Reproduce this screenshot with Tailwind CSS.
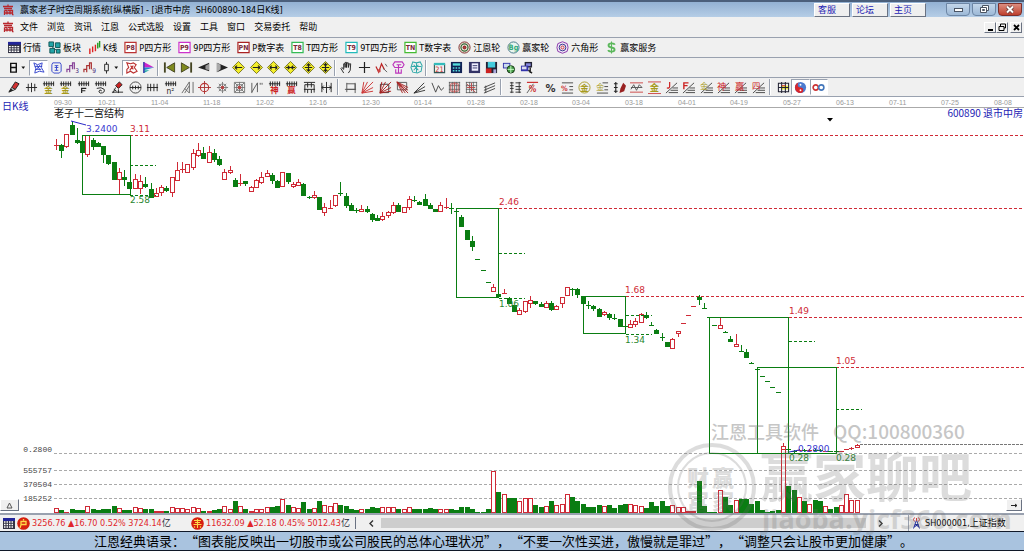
<!DOCTYPE html>
<html lang="zh-CN">
<head>
<meta charset="utf-8">
<title>赢家老子时空周期系统[纵横版]</title>
<script src="https://cdn.jsdelivr.net/npm/@tailwindcss/browser@4"></script>
</head>
<body class="flex h-screen flex-col overflow-hidden bg-white font-['DejaVu_Sans_Condensed','Open_Sans','Noto_Sans_CJK_SC',sans-serif] text-[9px] leading-3 text-black select-none">

<header class="flex h-[17px] shrink-0 items-center border-t-2 border-[#4b5f7b] bg-linear-to-b from-[#93b1d3] to-[#b5cde6] pl-[2px]">
  <svg class="h-[12px] w-[12px]" viewBox="0 0 12 12"><path d="M1 2.500h10M6 .5v2M2 4.500h8M2.500 6.500h2.500v4M2.500 6.500v4.500M6 6.500h2v4M8.500 6.500h2v4l1 .5M3 9h7" fill="none" stroke="#b8272d" stroke-width="1.300"/></svg>
  <h1 class="ml-[6px] whitespace-pre">赢家老子时空周期系统[纵横版] - [退市中房  SH600890-184日K线]</h1>
  <nav class="ml-auto flex gap-[2px] text-[#1c1cb4]">
    <a href="#kefu" class="h-[14px] w-9 border border-white border-r-gray-500 border-b-gray-500 bg-[#efefef] pl-[3px]">客服</a>
    <a href="#luntan" class="h-[14px] w-9 border border-white border-r-gray-500 border-b-gray-500 bg-[#efefef] pl-[3px]">论坛</a>
    <a href="#home" class="h-[14px] w-9 border border-white border-r-gray-500 border-b-gray-500 bg-[#efefef] pl-[3px]">主页</a>
  </nav>
  <div class="ml-5 mr-[2px] flex gap-[2px]">
    <button aria-label="最小化" class="flex h-[13px] w-6 items-center justify-center rounded-b-sm border border-[#6d86a5] bg-linear-to-b from-[#c3d6ea] to-[#9db9d7]"><span class="h-[4px] w-[9px] border border-gray-600 bg-white"></span></button>
    <button aria-label="还原" class="flex h-[13px] w-6 items-center justify-center rounded-b-sm border border-[#6d86a5] bg-linear-to-b from-[#c3d6ea] to-[#9db9d7]"><svg class="h-[9px] w-[11px]" viewBox="0 0 11 9" fill="#fff" stroke="#4b5563"><path d="M3.500 .5h6v5h-6z"/><path d="M1.500 2.500h6v5h-6z"/><path d="M3.500 4.500h2v1h-2z"/></svg></button>
    <button aria-label="关闭" class="flex h-[13px] w-6 items-center justify-center rounded-b-sm border border-[#7c2f2a] bg-linear-to-b from-[#dc8d80] to-[#bd3d2c]"><svg class="h-[9px] w-[10px]" viewBox="0 0 10 9"><path d="M2 1.500l6 6M8 1.500l-6 6" stroke="#5a3535" stroke-width="3.500"/><path d="M2 1.500l6 6M8 1.500l-6 6" stroke="#fff" stroke-width="2"/></svg></button>
  </div>
</header>

<div class="flex h-5 shrink-0 items-center bg-[#f0f0f0] pl-[2px]">
  <svg class="h-[12px] w-[12px]" viewBox="0 0 12 12"><path d="M1 2.500h10M6 .5v2M2 4.500h8M2.500 6.500h2.500v4M2.500 6.500v4.500M6 6.500h2v4M8.500 6.500h2v4l1 .5M3 9h7" fill="none" stroke="#b8272d" stroke-width="1.300"/></svg>
  <nav class="ml-[6px] flex gap-[9px]">
    <button>文件</button><button>浏览</button><button>资讯</button><button>江恩</button><button>公式选股</button><button>设置</button><button>工具</button><button>窗口</button><button>交易委托</button><button>帮助</button>
  </nav>
  <div class="mr-[2px] ml-auto flex">
    <button aria-label="最小化子窗口" class="flex h-[11px] w-3 items-end justify-center border border-white border-r-gray-500 border-b-gray-500 pb-[1px]"><span class="h-[2px] w-[5px] bg-black"></span></button>
    <button aria-label="还原子窗口" class="flex h-[11px] w-3 items-center justify-center border border-white border-r-gray-500 border-b-gray-500"><svg class="h-[9px] w-[9px]" viewBox="0 0 9 9" fill="#f0f0f0" stroke="#000"><path d="M2.500 1h5v4h-5z"/><path d="M1 3.500h5v4H1z"/></svg></button>
    <button aria-label="关闭子窗口" class="ml-[2px] flex h-[11px] w-3 items-center justify-center border border-white border-r-gray-500 border-b-gray-500"><svg class="h-[7px] w-[7px]" viewBox="0 0 7 7"><path d="M1 1l5 5M6 1l-5 5" stroke="#000" stroke-width="1.800"/></svg></button>
  </div>
</div>

<div id="bar1" class="flex h-5 shrink-0 items-center gap-[7px] border-t border-gray-400 bg-[#f0f0f0] pl-2"></div>
<div class="flex h-5 shrink-0 items-center border-t border-gray-400 bg-[#f0f0f0] pl-[5px]">
  <div id="bar2a" class="flex w-[152px]"></div>
  <div class="h-4 w-[2px] border-l border-gray-400 bg-white"></div>
  <div id="bar2b" class="ml-[2px] flex w-[173px]"></div>
  <div class="h-4 w-[2px] border-l border-gray-400 bg-white"></div>
  <div id="bar2c" class="ml-[2px] flex w-[87px]"></div>
  <div class="h-4 w-[2px] border-l border-gray-400 bg-white"></div>
  <div id="bar2d" class="ml-[4px] flex w-[104px]"></div>
</div>
<div class="flex h-5 shrink-0 items-center border-t border-b border-gray-400 bg-[#f0f0f0] pl-[5px]">
  <div id="bar3a" class="flex w-[330px]"></div>
  <div class="ml-[2px] h-4 w-[2px] border-l border-gray-400 bg-white"></div>
  <div id="bar3b" class="ml-[3px] flex w-[156px]"></div>
  <div class="ml-[2px] h-4 w-[2px] border-l border-gray-400 bg-white"></div>
  <div id="bar3c" class="ml-[5px] flex w-[260px]"></div>
  <div class="ml-[2px] h-4 w-[2px] border-l border-gray-400 bg-white"></div>
  <div id="bar3d" class="ml-[4px] flex w-[53px]"></div>
</div>

<main class="relative min-h-0 flex-1">
  <svg id="chart" class="block h-full w-full" viewBox="0 97 1024 416" role="img" aria-label="日K线图"></svg>
  <button aria-label="展开" class="absolute bottom-[2px] left-0 flex h-3 w-[19px] items-center justify-center border border-white border-r-gray-500 border-b-gray-500 bg-[#f0f0f0]"><svg class="h-[7px] w-[7px]" viewBox="0 0 7 7"><path d="M3.500 1l2.500 5h-5z" fill="none" stroke="#555"/></svg></button>
  <button aria-label="右移" class="absolute right-[2px] bottom-[2px] flex h-3 w-4 items-center justify-center border border-white border-r-gray-500 border-b-gray-500 bg-[#f0f0f0]"><svg class="h-[5px] w-[7px]" viewBox="0 0 7 5"><path d="M0 2.500h6M4 1l2 1.500l-2 1.500" fill="none" stroke="#222"/></svg></button>
</main>

<footer class="shrink-0">
  <div class="relative flex h-[18px] items-center border-t-2 border-gray-400 bg-[#f0f0f0] text-[#e0262b]">
    <svg class="ml-[3px] h-[11px] w-[12px]" viewBox="0 0 12 11"><path d="M0 0h12v11H0z" fill="#334"/><path d="M0 0h12v3H0z" fill="#22259a"/><path d="M1 4h10M1 6.500h10M1 9h10" stroke="#fff" stroke-width="1.500" stroke-dasharray="1.500 1"/></svg>
    <svg class="ml-[2px] h-[13px] w-[13px]" viewBox="0 0 13 13"><circle cx="6.500" cy="6.500" r="6.300" fill="#d6200f"/><path d="M6.500 2v1.500M4 4.500h5v3H4zM4 5v3l-1 3" fill="none" stroke="#ffd84a" stroke-width="1.300"/></svg>
    <span class="ml-[2px] w-[159px] whitespace-nowrap">3256.76 ▲16.70 0.52% 3724.14<span class="text-gray-800">亿</span></span>
    <svg class="h-[13px] w-[13px]" viewBox="0 0 13 13"><circle cx="6.500" cy="6.500" r="6.300" fill="#d6200f"/><path d="M3 3.500h7M4 5.500h5M2.500 7.500h8M6.500 2v9M4 9.500l-1 1M9 9.500l1 1" fill="none" stroke="#ffd84a" stroke-width="1.100"/></svg>
    <span class="ml-[2px] w-[150px] border-r border-gray-500 whitespace-nowrap">11632.09 ▲52.18 0.45% 5012.43<span class="text-gray-800">亿</span></span>
    <div class="flex h-full flex-1 items-center border-r border-gray-400">
      <button aria-label="向左滚动" class="flex h-full w-[25px] items-center justify-end pr-[7px]"><svg class="h-[7px] w-[5px]" viewBox="0 0 5 7"><path d="M4 .5l-3 3l3 3" fill="none" stroke="#333" stroke-width="1.400"/></svg></button>
      <div class="h-[10px] flex-1 bg-[#cdcdcd]"></div>
      <button aria-label="向右滚动" class="flex h-full w-[42px] items-center pl-3"><svg class="h-[7px] w-[5px]" viewBox="0 0 5 7"><path d="M1 .5l3 3l-3 3" fill="none" stroke="#333" stroke-width="1.400"/></svg></button>
    </div>
    <svg class="ml-[3px] h-[12px] w-[9px]" viewBox="0 0 9 12" fill="none"><path d="M4.500 3L1.500 11.500M4.500 3l3 8.500M3 7.500h3M2 10l4.500-2.500M7 10L3 7.500" stroke="#23309a"/><path d="M2.500 .5q-2 2 0 4M6.500 .5q2 2 0 4M4.500 1v3" stroke="#c93a3a"/></svg>
    <span class="ml-[4px] w-[99px] whitespace-nowrap text-black">SH000001,上证指数</span>
  </div>
  <p class="h-5 border-t border-b border-gray-900 bg-[#a9c3df] pl-[94px] font-['Noto_Sans_CJK_SC',sans-serif] text-[13px] leading-[18px] whitespace-nowrap [text-spacing-trim:space-all]">江恩经典语录：“图表能反映出一切股市或公司股民的总体心理状况”，“不要一次性买进，傲慢就是罪过”，“调整只会让股市更加健康”。</p>
</footer>

<svg class="pointer-events-none absolute right-0 bottom-[15px] h-[121px] w-[374px]" viewBox="650 415 374 121" aria-hidden="true" font-family="Noto Sans CJK SC, sans-serif" fill="#6b6b6b">
  <g opacity=".38"><text x="711" y="439" font-size="18" font-weight="500">江恩工具软件</text><text x="833" y="439" font-size="19" font-weight="500">QQ:100800360</text></g>
  <g opacity=".23">
    <circle cx="712" cy="487" r="42" fill="none" stroke="#6b6b6b" stroke-width="4"/>
    <circle cx="712" cy="487" r="34" fill="none" stroke="#6b6b6b" stroke-width="2"/>
    <g font-size="22" font-weight="900"><text x="687" y="486">财</text><text x="712" y="486">赢</text><text x="687" y="510">富</text><text x="712" y="510">家</text></g>
    <text x="760" y="497" font-size="53" font-weight="700">赢家聊吧</text>
    <text x="762" y="529" font-size="27" font-weight="700" font-family="Open Sans, sans-serif">jiaoba.yjcf360.com</text>
  </g>
</svg>

<script>
const box = (c, t) => `<path d="M1 1.500h12v11H1z" fill="#fff" stroke="${c}" stroke-width="1.300"/><text x="7" y="9.800" text-anchor="middle" font-size="7.500" font-weight="700" stroke="none" fill="#7a2a3a">${t}</text>`;
const glyph = (t, c, s = 13, cy = 7) => `<text x="7" y="${cy + s * .37}" text-anchor="middle" font-size="${s}" font-weight="600" stroke="none" fill="${c}">${t}</text>`;
const p = (d, c = '#222', w = 1) => `<path d="${d}" fill="none" stroke="${c}" stroke-width="${w}"/>`;
const f = (d, c) => `<path d="${d}" fill="${c}" stroke="none"/>`;
const calendar = f('M0 1h14v12H0z', '#334') + f('M0 1h14v3H0z', '#22259a') + '<path d="M1 6h12M1 8.500h12M1 11h12" stroke="#fff" stroke-width="1.500" stroke-dasharray="2 1"/>';
const comb = p('M1 3h12M2.500 .5v5M5 .5v5M7.500 .5v5M10 .5v5M12.500 .5v5');
const diamond = a => `<path d="M7 .5l6.500 6.500l-6.500 6.500l-6.500-6.500z" fill="#f4ef2a" stroke="#77741c"/>` + p(a, '#222', 1.2);
const pen = f('M5 7l4-6l4 2l-4 6z', '#d33131') + p('M5 7l4-6l4 2l-4 6zM5 7l-3 5l7-3') + f('M2 12l2-4l3 2z', '#222');
const lines = p('M4 12.500h10M6 10h8M8 7.500h6M1 13L13 2', '#444');
const grid = p('M1 1.500h12M1 5h12M1 9h12M1 12.500h12M1.500 1v12M5 1v12M9 1v12M12.500 1v12', '#555', .8);
const rays = c => p('M1 13L13 1M1 13L7 1M1 13L13 7M1 13L3 1M1 13L13 11', c);

const labelled = [
  ['行情', calendar],
  ['板块', f('M1 1h5v5H1zM8 2h5v5H8zM2 8h5v5H2zM9 9h4v4H9z', '#22a5a8') + p('M1 1h5v5H1zM8 2h5v5H8zM2 8h5v5H2zM9 9h4v4H9zM4 6l5 4', '#155')],
  ['K线', p('M2 8v6M5 6v6', '#d22', 1.500) + p('M8 4v7', '#d22', 1.500) + p('M10.500 2v6M12.500 0v7', '#292', 1.500)],
  ['P四方形', box('#b33', 'P8')], ['9P四方形', box('#c3c', 'P9')], ['P数字表', box('#a22', 'PN')],
  ['T四方形', box('#3b5', 'T8')], ['9T四方形', box('#2bb', 'T9')], ['T数字表', box('#4b3', 'TN')],
  ['江恩轮', '<circle cx="7" cy="7" r="6" fill="#f4e8df" stroke="#722"/><circle cx="7" cy="7" r="3.800" stroke="#363" stroke-width="1.300"/><circle cx="7" cy="7" r="1.600" fill="#c33" stroke="#622"/>'],
  ['赢家轮', '<circle cx="7" cy="7" r="6" fill="#e9f5ef" stroke="#478"/><text x="7" y="10" text-anchor="middle" font-size="8" font-weight="700" stroke="none" fill="#3a7">Bg</text>'],
  ['六角形', '<path d="M7 .8l5 2l1 4.200l-1 4.200l-5 2l-5-2l-1-4.200l1-4.200z" fill="#efe6f5" stroke="#83a"/><circle cx="7" cy="7" r="3.600" stroke="#338"/><circle cx="7" cy="7" r="1.600" stroke="#c33"/>'],
  ['赢家服务', p('M10.500 4Q10 2.500 7 2.500Q3.800 2.500 3.800 4.600Q3.800 6.600 7 7Q10.300 7.500 10.300 9.500Q10.300 11.500 7 11.500Q4 11.500 3.500 9.800', '#5cb85c', 2) + p('M7 .5v13', '#5cb85c', 1.200)]
];
document.getElementById('bar1').innerHTML = labelled.map(([t, s]) =>
  `<button class="flex items-center gap-[2px] whitespace-nowrap"><svg class="h-[13px] w-[13px]" viewBox="0 0 14 14" fill="none">${s}</svg>${t}</button>`).join('');

// Each entry: label, drawing, state ("on" = pressed, "menu" = has a drop-down arrow).
const bars = {
  bar2a: [
    ['日线', p('M4 2.500h6v9.500H4zM4 7h6', '#111', 1.5) + f('M15.500 6h4l-2 2.500z', '#111'), 'menu'],
    ['叠加', p('M2 2l4 2l5-2l-1 5l3 5l-5-1l-5 2l1-5zM3 6h8M4 9h6M5 4l4 6M9 4l-5 6', '#3344cc'), 'on'],
    ['信息', p('M3 2h8l1 2v7l-2 2H4l-2-2V4zM5 5h4M5 7h4M5 10h4M7 5v5', '#3344cc')],
    ['波段三', p('M1 12v-3h3v3M4 9V5h3v4M7 6V2h2v7', '#849', 1.3) + '<text x="10" y="13" font-size="7" stroke="none" fill="#427">3</text>'],
    ['波段九', p('M1 12v-3h3v3M4 9V5h3v4M7 6V2h2v7', '#a33', 1.3) + '<text x="10" y="13" font-size="7" stroke="none" fill="#427">9</text>'],
    ['K线样式', p('M5 3.500h4v7H5zM7 1v2.500M7 10.500v3', '#222') + f('M15.500 6h4l-2 2.500z', '#111'), 'menu'],
    ['缠绕', p('M2 2l4 1l3-1l3 2l-2 3l3 4l-4 2l-3-2l-4 2V9l2-2zM6 5l3 4M9 5l-4 5', '#b33', 1.2), 'on'],
    ['着色', f('M2 1l11 6H2z', '#c2c') + f('M2 7h11L2 10z', '#28c') + f('M2 10l6 0l-6 3z', '#2aa') + p('M2 1v12', '#33a', 1.5)]
  ],
  bar2b: [
    ['最前', p('M2 1.500v11', '#442', 2) + '<path d="M12.500 2v10L4 7z" fill="#7f8a1e" stroke="#442"/>'],
    ['最后', p('M12 1.500v11', '#442', 2) + '<path d="M1.500 2v10L10 7z" fill="#7f8a1e" stroke="#442"/>'],
    ['向前', f('M0 7l12-5v9z', '#222') + f('M8 5l4-2v7l-4-1z', '#999')], ['向后', f('M14 7L2 2v10z', '#222') + f('M2 2l4 2v5l-4 3z', '#aaa')],
    ['左移', diamond('M3 7h8M3 7l2.500-2M3 7l2.500 2')], ['右移', diamond('M3 7h8M11 7L8.500 5M11 7L8.500 9')],
    ['拉宽', diamond('M3 7h8M3 7l2-2M3 7l2 2M11 7L9 5M11 7L9 9')], ['压缩', diamond('M2 7h10M6 7L4 5M6 7L4 9M8 7l2-2M8 7l2 2')],
    ['拉高', diamond('M7 2.500v9M3 7h8M7 3l-2 2M7 3l2 2M7 11l-2-2M7 11l2-2')], ['压低', diamond('M7 2v10M3 7h8M5 3l2 2l2-2M5 11l2-2l2 2')]
  ],
  bar2c: [
    ['移动', p('M4 13L1 8l1-1l2 2V3h1.500v4V1.500H7V7l.5-5H9v5l1-4h1.500L11 10l-2 3')], ['十字', p('M7 1v12M1 7h12', '#222', 1.3)],
    ['波浪', p('M1 6l3 6l3-9l3 6', '#b22', 1.3) + p('M9 8l4 4M11 3l2 3', '#555') + f('M3 9h3v3H3z', '#c44')],
    ['画文', p('M3 1l8 0l2 3l-2 3H3L1 4zM5 4h5M7 4v9M4 9v4h6V9', '#b3b', 1.2)], ['区间', p('M3 1l4 1l4-1l2 4l-1 6l-4 2l-5-1l-2-5zM2 6h10M7 2v10M4 4l5 6M9 4l-5 6', '#3aa', 1.1)]
  ],
  bar2d: [
    ['日历', p('M1.500 3.500h11v9h-11z', '#355', 1.2) + f('M1 2h12v2.500H1z', '#3bb') + '<text x="7" y="11.500" text-anchor="middle" font-size="8" stroke="none" fill="#c33">21</text>'],
    ['计算器', f('M1 1h12v12H1z', '#125') + f('M3 2.500h8v2.500H3z', '#5dd') + '<path d="M3 7.500h8M3 10.500h8" stroke="#5dd" stroke-width="1.600" stroke-dasharray="1.700 1.300"/>'],
    ['笔记', f('M1 1h12v12H1z', '#336') + f('M4 2.500h7v8H4z', '#eef') + p('M5 5h5M5 7.500h5', '#336')],
    ['保存', f('M1 1h12v12H1z', '#223') + f('M3 1h8v6H3z', '#4cd') + f('M1 8h6v5H1z', '#c22') + f('M9 9h3v4H9z', '#aad')],
    ['网络', f('M1 2h8v6H1z', '#33a') + f('M2 3h6v4H2z', '#cde') + '<circle cx="9.500" cy="9" r="4" fill="#494" stroke="#131"/>' + p('M6 9h7M9.500 5v8', '#cfc')],
    ['终端', f('M5 1h8v6H5z', '#223') + f('M6.500 2.500h5v3h-5z', '#88d') + f('M1 5h8v6H1z', '#33a') + f('M2 6h5v3H2z', '#dde') + p('M9 10l4 3M11 7v6', '#222', 1.5)]
  ],
  bar3a: [
    ['画笔', pen], ['等分线', p('M1 7h12M3.500 3v8M7 2v10M10.500 3v8')],
    ['金线', comb + glyph('金', '#a79a1c', 9, 9.5)], ['金尺', comb + glyph('金', '#a79a1c', 9, 9.5)],
    ['斐波那契', comb + p('M5 13V8h5M5 10.500h4', '#222', 1.3)], ['螺旋', comb + p('M3 8q5-2 8 1q1 4-4 4q-3-1-1-3q2-1 2 1')],
    ['标注', f('M5 5l4-4l3 3l-4 4z', '#c22') + p('M5 5l4-4l3 3l-4 4zM1 12h12M3 9l3 2M8 9v4M2 13l3-6')],
    ['周期圆', '<circle cx="7" cy="7" r="6" stroke="#444"/>' + p('M1 7h12M4 5v4M7 5v4M10 5v4')], ['周期尺', p('M1 7h12M2 3v8M5 3v8M8.500 3v8M12 3v8')],
    ['平方', comb + '<text x="7" y="13.500" text-anchor="middle" font-size="9" stroke="none" fill="#222">n²</text>'],
    ['三角', p('M1 13L9 1v12L4 8M13 1v12M9 5L4 13', '#666')], ['圆心', '<circle cx="7" cy="7" r="4.500" stroke="#b33" stroke-width="1.200"/>' + p('M7 0v14M0 7h14', '#a33')],
    ['辐射', p('M7 1v12M1 7h12M3 3l8 8M11 3l-8 8', '#777') + '<circle cx="7" cy="7" r="4" stroke="#888"/><circle cx="7" cy="7" r="1.800" fill="#b44"/>'],
    ['方阵', p('M1.500 1.500h11v11h-11zM4 4h6v6H4zM2 2l10 10M12 2L2 12M7 1v12M1 7h12', '#777') + '<circle cx="7" cy="7" r="1.800" fill="#b44"/>'], ['速阻', p('M2 13V2M2 12L8 2v10M11 2v2M13 2v2', '#555')],
    ['神', comb + glyph('神', '#c22', 9, 9.5)], ['赢', comb + glyph('赢', '#c22', 9, 9.5)],
    ['刻度', p('M1 1.500h12M2 4h10M2 12.500V4M12 12.500V4M1 9h12M5 9v4M9 9v4M5 2v5M9 2v5')], ['对称', p('M2 2v10M12 2v10M7 1v12M2 7h10M4 5L2 7l2 2M10 5l2 2l-2 2')]
  ],
  bar3b: [
    ['矩形', p('M3 2v10M3 3h9v6H3M1 9h12M12 2v11', '#555')], ['射线红', rays('#c33')], ['射线框', p('M1.500 3.500h9v9h-9z', '#333') + rays('#a22')],
    ['方格', p('M1.500 1.500h10v8h-10z', '#555') + p('M1 1l12 12M1 1l12 6M1 1l6 12M1 1l12 9M1 1l9 12', '#a22')], ['扇形', p('M1 13L12 2M1 13L13 6M1 13L13 10', '#333')],
    ['折线', p('M1 2l4 10l3-7l3 5l3-3', '#444')], ['网格', grid + p('M3 3h8v8H3zM7 1v12', '#b55')], ['网格二', grid + p('M2 3l9 9M2 7h9M7 2v9', '#b44')],
    ['平行线', p('M1 7l12-5M1 10l12-5M1 13l12-5M3 5v8', '#444')]
  ],
  bar3c: [
    ['价格尺', p('M3 1v12M1 2h4M1 5h4M1 8h4M1 12h4M7 2h6M7 6h6M7 9h6M7 12h6M11 1v12', '#333')],
    ['百分线', p('M1 1.500h12', '#c33', 1.3) + p('M1 13L8 3', '#555') + glyph('%', '#c33', 9, 8.5)], ['百分比', glyph('%', '#333', 12)],
    ['百分尺', p('M1 2h12M9 6h4M9 9.500h4M1 13h12', '#444') + '<text x="0" y="11" font-size="8" font-weight="700" stroke="none" fill="#c33">%</text>'],
    ['金圆', '<circle cx="7" cy="7" r="6" stroke="#aa9a28"/>' + glyph('金', '#a79a1c', 9)],
    ['金尺二', p('M7 2h6M9 6h4M9 9.500h4M1 13h12', '#444') + '<text x="0" y="10" font-size="9" stroke="none" fill="#a79a1c">金</text>'],
    ['标尺', p('M3 1v12M1 3h4M1 7h4M1 11h4', '#222', 1.2) + f('M8 8l3-6l3 3l-2 6l-5 2z', '#922')],
    ['波线', p('M0 2h14M0 12h14', '#c44') + p('M1 9l3-5l3 6l3-6l3 3M1 7h12', '#555')], ['金横', p('M0 1h14M0 13.500h14', '#c44') + glyph('金', '#a79a1c', 10)],
    ['J线', lines + p('M5 1v5q0 2-3 1.500', '#c22', 1.300)],
    ['F线', lines + p('M2 9V2h5M2 5h4', '#c22', 1.500)],
    ['金角', lines + '<text x="0" y="9" font-size="9" stroke="none" fill="#a79a1c">金</text>'],
    ['神角', lines + '<text x="0" y="10" font-size="10" stroke="none" fill="#c22">神</text>'],
    ['赢角', lines + '<text x="1" y="10" font-size="10" stroke="none" fill="#c22">赢</text>'],
    ['四角', lines + '<text x="0" y="9" font-size="9" stroke="none" fill="#c22">四</text>']
  ],
  bar3d: [
    ['十字格', f('M5 5h8v4H5z', '#ee4') + p('M1.500 2.500h11v9h-11zM5 1v12M9 1v12M1 7h12', '#223', 1.1) + p('M5 5h4', '#d33')],
    ['太极', '<circle cx="7" cy="7" r="6" fill="#4c7bd0" stroke="none"/>' + f('M7 1a6 6 0 1 0 0 12a3 3 0 0 0 0-6a3 3 0 0 1 0-6z', '#d8262c') + '<circle cx="7" cy="4" r="1" fill="#fff"/><circle cx="7" cy="10" r="1" fill="#fff"/>', 'on'],
    ['无限', '<circle cx="4" cy="7" r="2.800" stroke="#c33" stroke-width="1.700"/><circle cx="10" cy="7" r="2.800" stroke="#47b" stroke-width="1.700"/>', 'on']
  ]
};
const buttonClass = {
  on: 'flex h-4 flex-1 items-center justify-center border border-gray-400 border-r-white border-b-white bg-white',
  menu: 'flex h-4 w-6 shrink-0 items-center pl-[2px]',
  plain: 'flex h-4 flex-1 items-center justify-center'
};
for (const [id, icons] of Object.entries(bars)) {
  document.getElementById(id).innerHTML = icons.map(([label, s, state]) =>
    `<button aria-label="${label}" class="${buttonClass[state || 'plain']}"><svg class="h-[13px] w-[13px] shrink-0 overflow-visible" viewBox="0 0 14 14" fill="none">${s}</svg></button>`).join('');
}

// Candles: colour, high, body top, body bottom, low.
const candles = `r139 145 145 150|g144 145 150 158|r134 134 146 148|g121 125 134 134|g128 140 142 144|g141 141 152 152|r135 135 154 157|g138 140 146 150|g142 143 146 147|g146 146 154 163|g155 155 163 165|g162 162 179 179|r168 172 179 194|g170 177 179 186|g182 182 188 188|r174 179 188 189|r175 181 188 194|g177 184 186 188|g183 189 197 197|r188 193 196 197|r185 187 192 196|g186 188 190 192|r177 177 192 197|r162 170 180 181|r162 169 170 173|r164 164 172 173|r149 153 167 170|r143 150 155 157|g147 153 158 159|r146 152 162 162|g149 153 159 162|g156 159 164 166|r169 172 179 179|r166 170 172 174|g178 180 186 186|r174 183 184 186|g181 181 183 186|r186 187 191 191|r179 180 187 187|r172 177 182 184|r170 173 176 177|g173 175 180 184|g180 181 187 188|r172 172 186 187|g173 173 181 184|r182 184 186 188|r179 182 185 186|g183 184 195 196|g196 197 198 199|r191 195 197 199|g197 197 209 209|r203 207 212 216|r200 208 209 209|r195 195 205 207|g182 193 194 196|g193 196 205 208|g203 205 210 211|g208 210 211 213|r205 209 211 212|g206 209 211 213|g213 214 219 222|g215 218 220 221|r212 216 219 221|r211 212 215 218|r202 205 212 214|g203 205 211 212|r207 207 212 212|r196 199 207 210|g196 200 201 202|g201 202 204 205|g194 199 205 205|g203 205 208 209|g209 209 211 212|r202 205 211 212|r198 207 208 209|g203 208 209 214|g208 211 212 212|g215 217 226 226|g230 230 239 239|g236 241 246 251|g259 259 260 260|g270 270 271 271|g282 282 283 283|r284 287 291 291|g293 294 296 297|r289 293 294 294|g297 298 303 303|g305 305 311 312|r308 310 314 314|r301 301 311 313|r296 300 303 308|g301 301 303 305|g302 304 306 307|r301 303 307 307|g301 303 309 311|r305 306 309 310|r297 297 303 308|r287 287 295 295|g288 289 290 296|g288 289 294 298|g296 296 303 303|g301 305 306 309|g305 306 308 311|g308 309 316 316|r311 312 314 316|g313 314 317 320|g314 318 319 320|g319 319 326 326|g326 326 327 327|r320 324 327 327|r318 321 324 327|r313 314 322 323|g312 315 317 319|g322 325 326 326|g329 330 333 333|g333 337 338 341|g342 342 346 346|r338 339 348 349|r331 331 333 337|r323 323 324 324|r315 315 316 316|r306 306 307 307|g295 297 299 305|g303 308 309 309|g317 317 318 318|g325 325 326 326|r317 325 328 329|g331 332 333 333|g336 339 341 341|r334 344 346 347|g345 351 352 352|g349 352 357 358|g362 363 364 364|g369 369 370 370|g376 376 377 377|g381 381 382 382|g387 387 388 388|g392 392 393 393|r443 446 451 453|g447 449 450 453|g450 451 452 453|r449 450 451 451|g449 450 451 452|r449 450 451 452|g449 450 451 451|g449 450 451 452|r451 451 452 452|g451 451 452 452|g450 451 452 453|r451 451 452 452|r449 449 450 450|r447 448 449 450|r444 445 447 448`.split('|');
const volumes = [12,8,4,13,8,8,18,11,10,11,11,20,13,8,8,16,13,11,12,7,6,5,16,13,12,10,15,13,5,7,9,12,19,10,37,19,12,6,8,10,16,18,22,40,25,16,13,34,13,12,37,22,17,28,23,21,12,8,8,11,19,15,15,14,15,11,10,15,11,11,12,14,12,8,8,11,9,17,18,13,2,2,13,122,62,53,45,45,32,43,41,23,18,18,35,20,25,55,48,36,28,17,18,23,18,25,16,24,27,23,20,18,16,32,22,37,20,20,15,16,5,5,97,20,3,4,65,47,25,36,41,41,28,36,9,3,5,8,190,82,70,45,37,23,40,36,18,13,17,20,55,35,37];
const RED = '#cf2a36', GREEN = '#0a7d12';
let out = '';
const line = (x1, y1, x2, y2, c, dash = '') => out += `<path d="M${x1} ${y1}L${x2} ${y2}" stroke="${c}" fill="none" stroke-dasharray="${dash}"/>`;
const text = (x, y, s, c, size, more = '') => out += `<text x="${x}" y="${y}" fill="${c}" font-size="${size}" ${more}>${s}</text>`;
out += '<g shape-rendering="crispEdges">';
line(54, 107.5, 1024, 107.5, '#aaa');
for (const y of [453.5, 470.5, 484.5, 498.5]) line(54, y, 1024, y, '#aaa', '3 2');
line(860, 444.5, 1024, 444.5, '#777', '3 1');
for (const [x, y] of [[130, 135.5], [499, 208.5], [626, 296.5], [789, 317.5], [836, 367.5]]) line(x, y, 1024, y, RED, '3 2');
candles.forEach((c, i) => {
  const x = Math.round(55.7 + 5.27 * i), col = c[0] === 'r' ? RED : GREEN;
  const [h, t, b, l] = c.slice(1).split(' ').map(Number);
  if (l > h + 1) line(x + .5, h, x + .5, l, col);
  if (b - t < 2) line(x - 2, t + .5, x + 3, t + .5, col);
  else if (c[0] === 'r') out += `<rect x="${x - 1.5}" y="${t + .5}" width="4" height="${b - t}" fill="#fff" stroke="${col}"/>`;
  else out += `<rect x="${x - 2}" y="${t}" width="5" height="${b - t + 1}" fill="${col}"/>`;
  const vh = Math.max(1, Math.round(volumes[i] / 3));
  if (c[0] === 'r' && vh > 2) out += `<rect x="${x - 1.5}" y="${512.5 - vh}" width="4" height="${vh}" fill="#fff" stroke="${col}"/>`;
  else out += `<rect x="${x - 2}" y="${513 - vh}" width="5" height="${vh}" fill="${col}"/>`;
});
for (const [x1, y1, x2, y2] of [[82, 135, 130, 194], [456, 208, 498, 297], [583, 296, 625, 333], [709, 317, 788, 453], [757, 367, 836, 453]])
  out += `<rect x="${x1 + .5}" y="${y1 + .5}" width="${x2 - x1}" height="${y2 - y1}" fill="none" stroke="${GREEN}"/>`;
for (const [x, y] of [[130, 165.5], [130, 195.5], [499, 253.5], [499, 298.5], [626, 315.5], [626, 334.5], [789, 341.5], [836, 409.5]]) line(x, y, x + 26, y, GREEN, '3 2');
out += '</g>';
line(71, 121, 86, 125, '#2a2ac8');
line(789, 452, 799, 450, '#2a2ac8');
['09-30','10-21','11-04','11-18','12-02','12-16','12-30','01-14','01-28','02-18','03-04','03-18','04-01','04-19','05-27','06-13','07-11','07-25','08-08']
  .forEach((d, i) => text(i ? 98 + Math.round((i - 1) * 52.7) : 54, 105, d, '#999', 7, 'font-family="Liberation Sans"'));
text(2, 110, '日K线', '#1c1cb4', 10, 'font-family="Noto Sans CJK SC"');
text(54, 117, '老子十二宫结构', '#111', 10, 'font-family="Noto Sans CJK SC"');
text(1023, 117, '600890 退市中房', '#1c1cb4', 10, 'text-anchor="end" font-family="Noto Sans CJK SC"');
out += '<path d="M827 118h6l-3 3.500z" fill="#000"/>';
const num = 'font-family="DejaVu Sans, sans-serif"';
text(86, 132, '3.2400', '#3a3ad0', 9, num);
text(798, 452, '0.2800', '#3a3ad0', 9, num);
for (const [x, y, s] of [[130, 132, '3.11'], [499, 205, '2.46'], [625, 293, '1.68'], [789, 314, '1.49'], [836, 364, '1.05']]) text(x, y, s, RED, 9, num);
for (const [x, y, s] of [[130, 203, '2.58'], [499, 307, '1.06'], [625, 343, '1.34'], [789, 461, '0.28'], [836, 461, '0.28']]) text(x, y, s, '#2a862f', 9, num);
for (const [y, s] of [[452, '0.2800'], [473, '555757'], [487, '370504'], [501, '185252']]) text(52, y, s, '#444', 8, 'text-anchor="end" font-family="Liberation Mono"');
document.getElementById('chart').innerHTML = out;
</script>
</body>
</html>
